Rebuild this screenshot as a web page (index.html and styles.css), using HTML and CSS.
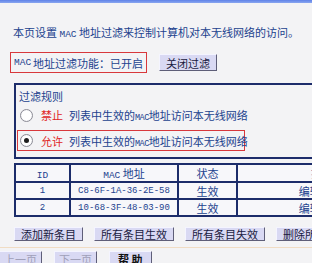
FILE: index.html
```html
<!DOCTYPE html>
<html lang="zh-CN">
<head>
  <meta charset="UTF-8" />
  <title>MAC 地址过滤</title>
  <link rel="stylesheet" href="styles.css">
</head>
<body>
  <div class="topbar"></div>

  <p class="intro">本页设置 <span class="en">MAC</span> 地址过滤来控制计算机对本无线网络的访问。</p>

  <div class="status-row">
    <span class="status"><span class="en">MAC</span> 地址过滤功能：已开启</span>
    <button class="btn btn-close">关闭过滤</button>
  </div>

  <div class="rules">
    <div class="rules-title">过滤规则</div>
    <div class="rule">
      <span class="radio"></span>
      <span class="red">禁止</span>
      <span>列表中生效的<span class="en sm">MAC</span>地址访问本无线网络</span>
    </div>
    <div class="rule rule-on">
      <span class="radio checked"></span>
      <span class="red">允许</span>
      <span>列表中生效的<span class="en sm">MAC</span>地址访问本无线网络</span>
    </div>
  </div>

  <table class="mac-table">
    <tr class="head">
      <td class="c-id"><span class="en">ID</span></td>
      <td class="c-mac"><span class="en">MAC</span> 地址</td>
      <td class="c-state">状态</td>
      <td class="c-op">操作</td>
    </tr>
    <tr>
      <td class="en">1</td>
      <td class="en">C8-6F-1A-36-2E-58</td>
      <td>生效</td>
      <td class="op">编辑 删除</td>
    </tr>
    <tr class="last">
      <td class="en">2</td>
      <td class="en">10-68-3F-48-03-90</td>
      <td>生效</td>
      <td class="op">编辑 删除</td>
    </tr>
  </table>

  <div class="actions">
    <button class="btn">添加新条目</button>
    <button class="btn">所有条目生效</button>
    <button class="btn">所有条目失效</button>
    <button class="btn">删除所有条目</button>
  </div>

  <div class="pager">
    <button class="btn btn-off">上一页</button>
    <button class="btn btn-off">下一页</button>
    <button class="btn btn-help">帮 助</button>
  </div>
</body>
</html>
```

FILE: styles.css
```css
* {
  box-sizing: border-box;
}
html, body {
  margin: 0;
  padding: 0;
}
body {
  width: 312px;
  height: 263px;
  overflow: hidden;
  background-color: #f3f3f5;
  color: #22428e;
  font-family: "Noto Sans CJK SC", sans-serif;
  font-size: 11px;
  line-height: 16px;
}
.topbar {
  height: 3px;
  background: linear-gradient(#5f82e8, #8aa6f0);
}
.en {
  font-family: "Liberation Mono", monospace;
  font-size: 9.5px;
  line-height: 1;
}
.en.sm {
  font-size: 8.5px;
  letter-spacing: -0.5px;
}
.intro {
  height: 16px;
  margin: 21px 0 0 13px;
  white-space: nowrap;
}
.status-row {
  display: flex;
  align-items: center;
  height: 21px;
  margin: 12px 0 0 10px;
}
.status {
  display: flex;
  align-items: center;
  gap: 2px;
  height: 21px;
  padding: 0 3px;
  border: 1px solid #d8383c;
  white-space: nowrap;
}
.btn {
  height: 14px;
  padding: 0 6px;
  font-family: "Noto Sans CJK SC", sans-serif;
  font-size: 11px;
  line-height: 12px;
  color: #1a1a40;
  background-color: #d9d9f3;
  border: 1px solid;
  border-color: #f4f4ff #5e5e78 #5e5e78 #f4f4ff;
  white-space: nowrap;
  flex-shrink: 0;
}
.btn-close {
  margin-left: 12px;
  height: 17px;
  padding: 0 6px;
}
.rules {
  width: 320px;
  height: 76px;
  margin: 10px 0 0 14px;
  padding: 3px 0 6px 0;
  border: 2px solid #1c2c6a;
}
.rules-title {
  height: 16px;
  padding-left: 3px;
  white-space: nowrap;
}
.rule {
  display: flex;
  align-items: center;
  gap: 8px;
  width: 228px;
  height: 20px;
  margin: 1px 0 0 1px;
  padding-left: 2px;
  border: 1px solid transparent;
  white-space: nowrap;
}
.rule-on {
  height: 21px;
  margin-top: 5px;
  border-color: #d8383c;
}
.rule .red {
  color: #e02424;
  margin-right: -2px;
}
.radio {
  width: 13px;
  height: 13px;
  border-radius: 50%;
  border: 1px solid #8c8c96;
  background: radial-gradient(circle, #ffffff 55%, #dedee6);
  position: relative;
  flex-shrink: 0;
}
.radio.checked::after {
  content: "";
  position: absolute;
  left: 3px;
  top: 3px;
  width: 5px;
  height: 5px;
  border-radius: 50%;
  background-color: #1e1e1e;
}
.mac-table {
  width: 392px;
  margin: 4px 0 0 14px;
  border-collapse: separate;
  border-spacing: 0;
  table-layout: fixed;
}
.mac-table td {
  height: 17px;
  padding: 0;
  border-top: 2px solid #1c2c6a;
  border-left: 2px solid #1c2c6a;
  line-height: 14px;
  text-align: center;
  white-space: nowrap;
  overflow: hidden;
  background-color: #f7f7fa;
}
.mac-table td.en {
  font-size: 9px;
}
.mac-table .head td {
  height: 18px;
}
.mac-table .last td {
  height: 19px;
  border-bottom: 2px solid #1c2c6a;
}
.c-id { width: 55px; }
.c-mac { width: 108px; }
.c-state { width: 59px; }
.c-op { width: 170px; }
.actions {
  display: flex;
  gap: 11px;
  margin: 10px 0 0 14px;
}
.pager {
  display: flex;
  gap: 12px;
  margin-top: 6px;
  padding-top: 3px;
  border-top: 1px solid #f0dcc4;
}
.btn-off {
  height: 16px;
  padding: 0 4px;
  color: #a0a0b8;
}
.pager .btn-off:first-child {
  margin-left: -1px;
}
.btn-help {
  height: 16px;
  padding: 0 8px;
  font-weight: bold;
  color: #111;
}
```
